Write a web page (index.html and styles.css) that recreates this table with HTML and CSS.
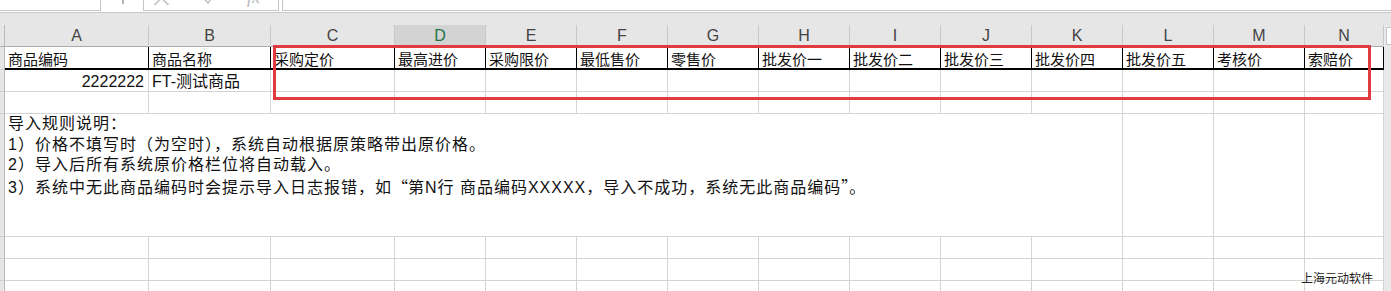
FILE: index.html
```html
<!DOCTYPE html>
<html lang="zh-CN">
<head>
<meta charset="utf-8">
<title>导入模板</title>
<link rel="stylesheet" href="styles.css">
</head>
<body>
<div class="app">
  <div class="fbar">
    <div class="namebox"></div>
    <div class="grip"></div>
    <div class="fxbox">
      <svg class="ic ic-x" width="15" height="10" viewBox="0 0 15 10"><path d="M0.5 -9 L14.5 5 M14.5 -9 L0.5 5"/></svg>
      <svg class="ic ic-ok" width="12" height="10" viewBox="0 0 12 10"><path d="M-3 -6 L5 3 L15 -10"/></svg>
      <span class="fx">fx</span>
    </div>
    <div class="finput"></div>
  </div>
  <div class="band"></div>

  <div class="sheet">
    <div class="rh corner"></div>
    <div class="ch">A</div><div class="ch">B</div><div class="ch">C</div><div class="ch sel">D</div><div class="ch">E</div><div class="ch">F</div><div class="ch">G</div><div class="ch">H</div><div class="ch">I</div><div class="ch">J</div><div class="ch">K</div><div class="ch">L</div><div class="ch">M</div><div class="ch">N</div>
    <div class="scroll"><div class="sb-up"></div></div>

    <div class="rh"></div>
    <div class="c hd">商品编码</div><div class="c hd">商品名称</div><div class="c hd">采购定价</div><div class="c hd">最高进价</div><div class="c hd">采购限价</div><div class="c hd">最低售价</div><div class="c hd">零售价</div><div class="c hd">批发价一</div><div class="c hd">批发价二</div><div class="c hd">批发价三</div><div class="c hd">批发价四</div><div class="c hd">批发价五</div><div class="c hd">考核价</div><div class="c hd">索赔价</div>

    <div class="rh"></div>
    <div class="c val num">2222222</div><div class="c val">FT-测试商品</div><div class="c"></div><div class="c"></div><div class="c"></div><div class="c"></div><div class="c"></div><div class="c"></div><div class="c"></div><div class="c"></div><div class="c"></div><div class="c"></div><div class="c"></div><div class="c"></div>

    <div class="rh"></div>
    <div class="c"></div><div class="c"></div><div class="c"></div><div class="c"></div><div class="c"></div><div class="c"></div><div class="c"></div><div class="c"></div><div class="c"></div><div class="c"></div><div class="c"></div><div class="c"></div><div class="c"></div><div class="c"></div>

    <div class="rh"></div>
    <div class="c merged">
      <p class="ln">导入规则说明：</p>
      <p class="ln">1）价格不填写时（为空时），系统自动根据原策略带出原价格。</p>
      <p class="ln">2）导入后所有系统原价格栏位将自动载入。</p>
      <p class="ln">3）系统中无此商品编码时会提示导入日志报错，如<span class="cjkq">“</span>第N行 商品编码XXXXX，导入不成功，系统无此商品编码<span class="cjkq">”</span>。</p>
    </div>
    <div class="c"></div><div class="c"></div><div class="c"></div>

    <div class="rh"></div>
    <div class="c"></div><div class="c"></div><div class="c"></div><div class="c"></div><div class="c"></div><div class="c"></div><div class="c"></div><div class="c"></div><div class="c"></div><div class="c"></div><div class="c"></div><div class="c"></div><div class="c"></div><div class="c"></div>

    <div class="rh"></div>
    <div class="c"></div><div class="c"></div><div class="c"></div><div class="c"></div><div class="c"></div><div class="c"></div><div class="c"></div><div class="c"></div><div class="c"></div><div class="c"></div><div class="c"></div><div class="c"></div><div class="c"></div><div class="c"></div>

    <div class="rh"></div>
    <div class="c"></div><div class="c"></div><div class="c"></div><div class="c"></div><div class="c"></div><div class="c"></div><div class="c"></div><div class="c"></div><div class="c"></div><div class="c"></div><div class="c"></div><div class="c"></div><div class="c"></div><div class="c"></div>
  </div>

  <div class="redbox"></div>
  <div class="brand">上海元动软件</div>
</div>
</body>
</html>
```

FILE: styles.css
```css
* { box-sizing: border-box; }
html, body { margin: 0; padding: 0; }
body {
  width: 1391px;
  height: 291px;
  overflow: hidden;
  background: #fff;
  font-family: "Liberation Sans", "Noto Sans CJK SC", sans-serif;
  color: #000;
}
.app {
  position: relative;
  width: 1391px;
  height: 291px;
  overflow: hidden;
}

/* formula bar (cut off at top) */
.fbar {
  display: flex;
  align-items: flex-start;
  height: 13px;
  border-bottom: 1px solid #c8c8c8;
  background: #fff;
}
.namebox {
  width: 101px;
  height: 11px;
  border-right: 1px solid #c6c6c6;
  border-bottom: 1px solid #c6c6c6;
  background: #fff;
}
.grip {
  width: 2px;
  height: 4px;
  margin-left: 21px;
  background: #b5b5b5;
}
.fxbox {
  display: flex;
  align-items: flex-start;
  width: 136px;
  height: 11px;
  margin-left: 19px;
  border-left: 1px solid #c6c6c6;
  border-right: 1px solid #c6c6c6;
  border-bottom: 1px solid #c6c6c6;
  overflow: hidden;
  background: #fff;
}
.ic { display: block; flex: none; fill: none; stroke: #c4c4c4; stroke-width: 1.6; }
.ic-x { margin-left: 10px; }
.ic-ok { margin-left: 34px; }
.fx {
  margin-left: 32px;
  margin-top: -12px;
  font-family: "Liberation Serif", serif;
  font-style: italic;
  font-size: 18px;
  line-height: 18px;
  color: #b8b8b8;
}
.finput {
  flex: 1;
  height: 11px;
  margin-left: 3px;
  border-left: 1px solid #c6c6c6;
  border-bottom: 1px solid #c6c6c6;
  background: #fff;
}

.band {
  height: 12px;
  background: #e6e6e6;
}

/* sheet grid */
.sheet {
  display: grid;
  grid-template-columns: 5px 144px 122px 124px repeat(10, 91px) 79px 7px;
  grid-template-rows: 22px 23px 22px 22px 123px 22px 22px 22px;
}
.rh {
  background: #e6e6e6;
  border-right: 1px solid #b9b9b9;
  border-bottom: 1px solid #cfcfcf;
}
.rh.corner { border-bottom-color: #ababab; }
.ch {
  display: flex;
  justify-content: center;
  padding-top: 1px;
  background: #e6e6e6;
  border-right: 1px solid #c8c8c8;
  border-bottom: 1px solid #ababab;
  font-size: 16px;
  line-height: 20px;
  color: #444;
}
.ch.sel {
  background: #d3d3d3;
  color: #217346;
}
.scroll {
  grid-column: 16;
  grid-row: 1 / 9;
  background: #e9e9e9;
  padding: 2px 0 0 2px;
}
.sb-up {
  height: 18px;
  background: #fff;
  border-left: 1px solid #c6c6c6;
  border-top: 1px solid #c6c6c6;
  border-bottom: 1px solid #c6c6c6;
}

.c {
  border-right: 1px solid #d4d4d4;
  border-bottom: 1px solid #d4d4d4;
  white-space: nowrap;
}
.hd {
  border-right-color: #000;
  border-bottom: 2px solid #000;
  padding: 3px 0 0 3px;
  font-family: "Noto Sans CJK SC", sans-serif;
  font-size: 15px;
  line-height: 17px;
  color: #111;
}
.val {
  padding: 1px 0 0 3px;
  font-size: 16px;
  line-height: 21px;
  color: #111;
}
.num {
  text-align: right;
  padding-right: 4px;
}
.merged {
  grid-column: 2 / 13;
  padding: 0 0 0 3px;
  font-size: 16px;
  letter-spacing: 1px;
  color: #111;
}
.ln {
  margin: 0;
  line-height: 20.7px;
}
.cjkq {
  font-family: "Noto Sans CJK SC", sans-serif;
  letter-spacing: 0;
}

/* overlays */
.redbox {
  position: absolute;
  left: 273px;
  top: 45px;
  width: 1098px;
  height: 55px;
  border: 3px solid #e23b3f;
}
.brand {
  position: absolute;
  left: 1301px;
  top: 271px;
  font-family: "Noto Sans CJK SC", sans-serif;
  font-size: 12px;
  line-height: 14px;
  color: #222;
}
```
